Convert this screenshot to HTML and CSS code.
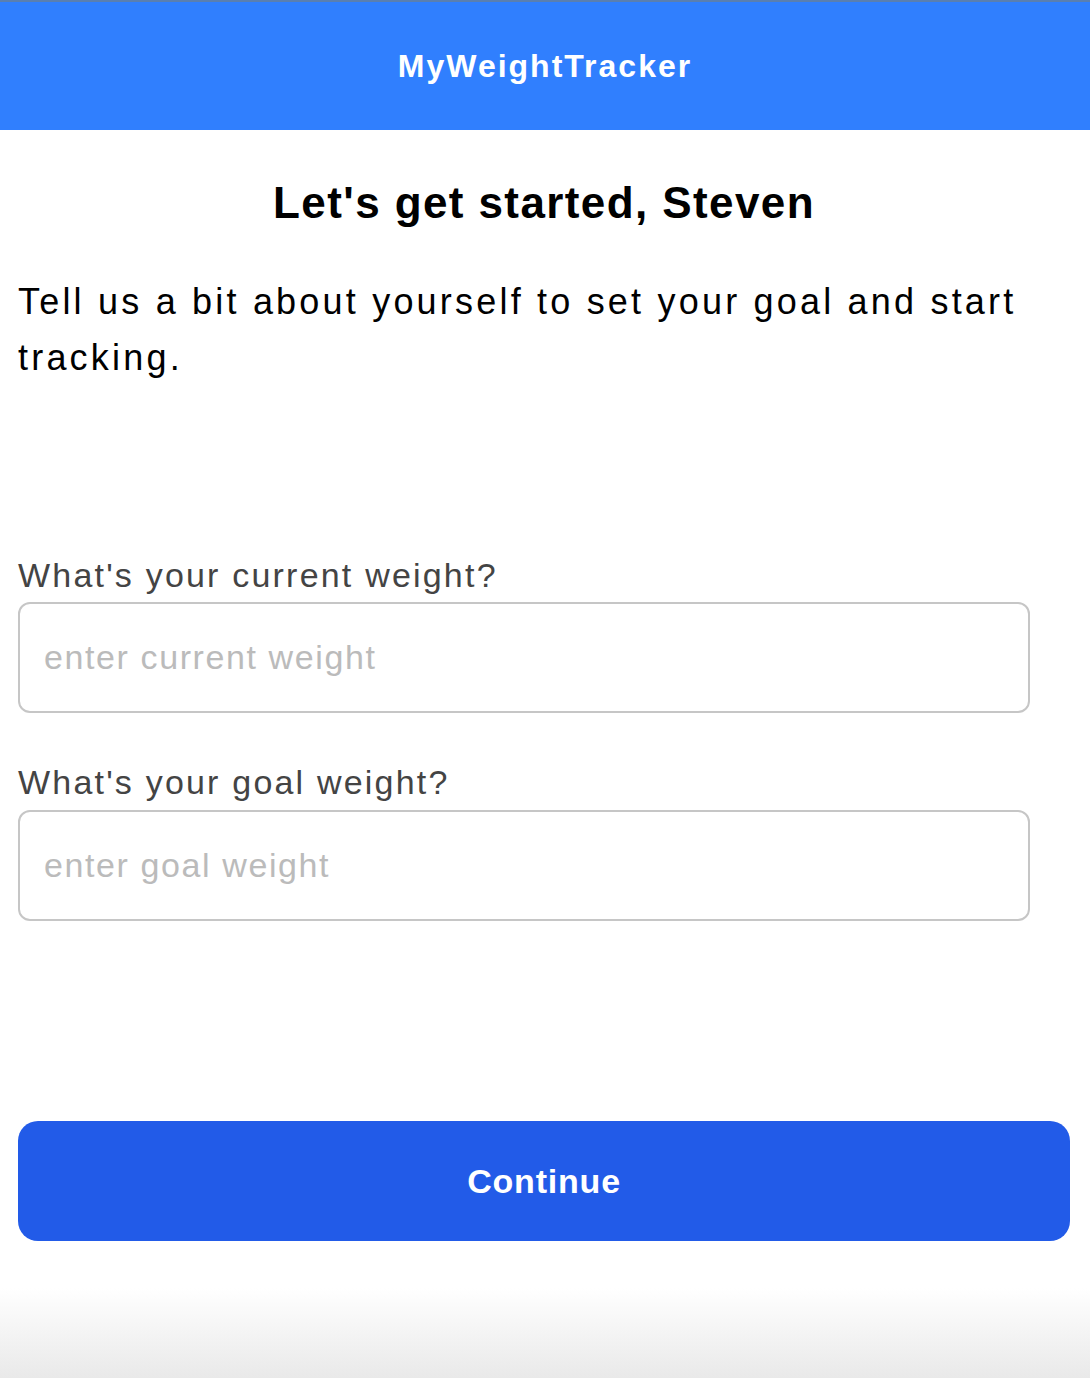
FILE: index.html
```html
<!DOCTYPE html>
<html lang="en">

<head>
    <meta charset="UTF-8">
    <meta name="viewport" content="width=device-width, initial-scale=1.0">
    <title>MyWeightTracker</title>
    <link rel="stylesheet" href="styles.css">
</head>

<body>

    <header class="topbar">
        <span class="brand">MyWeightTracker</span>
    </header>

    <main class="container">
        <h1>Let's get started, Steven</h1>
        <p class="intro">Tell us a bit about yourself to set your goal and start tracking.</p>

        <form id="goalForm" class="goal-form">
            <label for="currentWeight">What's your current weight?</label>
            <input type="text" id="currentWeight" placeholder="enter current weight">

            <label for="goalWeight" class="second">What's your goal weight?</label>
            <input type="text" id="goalWeight" placeholder="enter goal weight">

            <button type="submit">Continue</button>
        </form>
    </main>

</body>

</html>
```

FILE: styles.css
```css
html {
    min-height: 100%;
    background: linear-gradient(to bottom, #ffffff calc(100% - 90px), #e9e9e9 100%);
}

body {
    font-family: "Liberation Sans", Arial, sans-serif;
    margin: 0;
    color: #000;
}

.topbar {
    height: 128px;
    border-top: 2px solid #5a7fb0;
    background-color: #307ffe;
    display: flex;
    align-items: center;
    justify-content: center;
}

.brand {
    color: #fff;
    font-size: 32px;
    font-weight: bold;
    line-height: 40px;
    letter-spacing: 2px;
}

.container {
    padding: 0 20px 0 18px;
}

h1 {
    text-align: center;
    font-size: 44px;
    line-height: 52px;
    margin: 47px 0 0;
    letter-spacing: 1.4px;
}

.intro {
    font-size: 36px;
    line-height: 56px;
    margin: 45px 0 0;
    letter-spacing: 3.2px;
}

.goal-form {
    display: flex;
    flex-direction: column;
    margin-top: 169px;
}

label {
    font-size: 34px;
    line-height: 40px;
    color: #444;
    margin-bottom: 7px;
    letter-spacing: 2.2px;
}

label.second {
    margin-top: 49px;
    margin-bottom: 8px;
}

input[type="text"] {
    box-sizing: border-box;
    width: 1012px;
    height: 111px;
    padding: 0 24px;
    border: 2px solid #c6c6c6;
    border-radius: 12px;
    font-family: inherit;
    font-size: 34px;
    letter-spacing: 1.6px;
    color: #222;
    outline: none;
}

input::placeholder {
    color: #bbb;
}

button {
    margin-top: 200px;
    height: 120px;
    background-color: #225be8;
    color: #fff;
    border: none;
    border-radius: 20px;
    font-family: inherit;
    font-size: 34px;
    font-weight: bold;
    letter-spacing: 0.8px;
    cursor: pointer;
}
```
